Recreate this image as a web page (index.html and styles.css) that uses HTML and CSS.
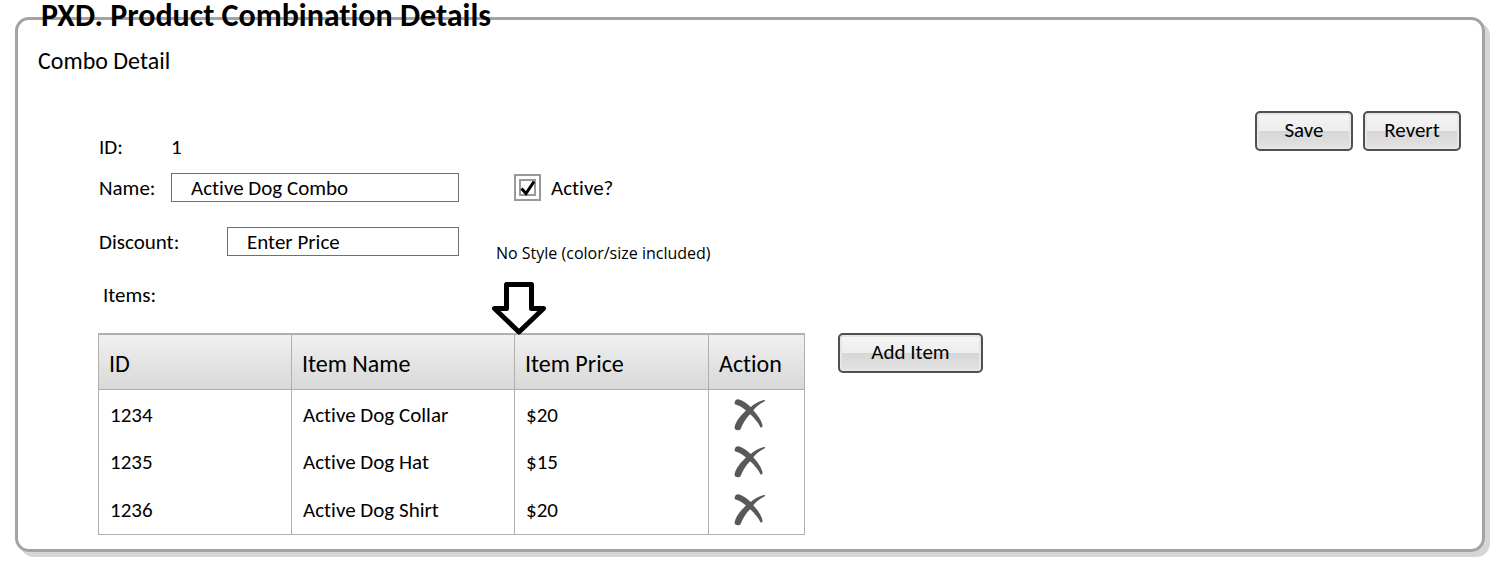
FILE: index.html
```html
<!DOCTYPE html>
<html lang="en">
<head>
<meta charset="utf-8">
<title>PXD. Product Combination Details</title>
<link rel="stylesheet" href="styles.css">
</head>
<body>
<svg class="defs" aria-hidden="true">
  <symbol id="cross" viewBox="0 0 32 32">
    <path d="M.7 3.200Q1.500 0 4.500 .3C9 1.500 13 4.500 16.700 8C21 4.500 25.500 1.700 30 1Q32 1 30.500 2.600C26.500 4.300 22.500 7.500 19.300 11.200C24 16.500 28 22 28.700 27.500L26.700 28.700C24.500 24 20 18.500 16 15.200C11.500 20 8.500 25 7 29.300Q6.500 31.500 4 31.300Q.3 31 .6 28C2 22 7 16 12 11.500C8.500 8.500 5.500 6.500 1.500 5.500Q.3 5 .7 3.200Z"/>
  </symbol>
</svg>
<main class="panel">
  <h1 class="title">PXD. Product Combination Details</h1>
  <h2 class="subtitle">Combo Detail</h2>
  <form class="content">
    <div class="top">
      <div class="fields">
        <div class="row row-id"><span class="label">ID:</span><span>1</span></div>
        <div class="row row-name">
          <div class="field">
            <label class="label" for="name">Name:</label>
            <input class="text" id="name" type="text" value="Active Dog Combo">
          </div>
          <label class="check">
            <span class="box">
              <input class="tick" type="checkbox" checked>
              <svg class="mark" viewBox="0 0 27 27" aria-hidden="true">
                <rect x="6" y="6" width="15" height="15" fill="none" stroke="#999" stroke-width="2"/>
                <path d="M7.500 14.500L12 19.500L20 7.500" fill="none" stroke="#000" stroke-width="3"/>
              </svg>
            </span>
            Active?
          </label>
        </div>
        <div class="field">
          <label class="label wide" for="discount">Discount:</label>
          <input class="text" id="discount" type="text" placeholder="Enter Price">
        </div>
      </div>
      <div class="actions">
        <button class="btn" type="submit">Save</button>
        <button class="btn" type="reset">Revert</button>
      </div>
    </div>
    <div class="items-label" id="items-label">Items:</div>
    <div class="items">
      <table class="table" aria-labelledby="items-label">
        <colgroup><col class="c-id"><col class="c-name"><col class="c-price"><col class="c-action"></colgroup>
        <thead><tr><th>ID</th><th>Item Name</th><th>Item Price</th><th>Action</th></tr></thead>
        <tbody>
          <tr><td>1234</td><td>Active Dog Collar</td><td>$20</td><td><button class="remove" type="button" aria-label="Remove 1234"><svg class="cross"><use href="#cross"/></svg></button></td></tr>
          <tr><td>1235</td><td>Active Dog Hat</td><td>$15</td><td><button class="remove" type="button" aria-label="Remove 1235"><svg class="cross"><use href="#cross"/></svg></button></td></tr>
          <tr><td>1236</td><td>Active Dog Shirt</td><td>$20</td><td><button class="remove" type="button" aria-label="Remove 1236"><svg class="cross"><use href="#cross"/></svg></button></td></tr>
        </tbody>
      </table>
      <button class="btn add" type="button">Add Item</button>
      <div class="note">
        <span>No Style (color/size included)</span>
        <svg class="arrow" viewBox="0 0 54 53" aria-hidden="true"><path d="M14.500 2.500H39.500V26.500H51.500L27 50L2.500 26.500H14.500Z"/></svg>
      </div>
    </div>
  </form>
</main>
</body>
</html>
```
FILE: styles.css
```css
* { box-sizing: border-box; }
body {
  min-height: 100vh;
  margin: 0;
  padding: 17px 17px 17px 15px;
  background: #fff;
  color: #000;
  font: 21px/24px Calibri, Carlito, Lato, sans-serif;
  font-variant-ligatures: none;
}
.defs { position: absolute; width: 0; height: 0; }
.panel {
  position: relative;
  padding: 29px 21px 14px 20px;
  border: 3px solid #a3a3a3;
  border-radius: 14px;
  box-shadow: 5px 5px 0 #d6d6d6;
}
.title {
  position: absolute;
  top: -20px;
  left: 23px;
  margin: 0;
  font-size: 32px;
  line-height: 32px;
  font-weight: 700;
  white-space: nowrap;
}
.subtitle { margin: 0; font-size: 24px; font-weight: 400; }
.content { margin-top: 38px; padding-left: 61px; }
.top { display: flex; justify-content: space-between; align-items: flex-start; }
.fields { padding-top: 24px; }
.row { display: flex; }
.row-name { gap: 55px; margin: 14px 0 25px; }
.field { display: flex; align-items: center; width: 360px; }
.label { width: 72px; }
.wide { width: 128px; }
.text {
  flex: 1;
  min-width: 0;
  height: 29px;
  padding: 0 19px;
  border: 1px solid #707070;
  background: #fff;
  color: #000;
  font: inherit;
  font-variant-ligatures: none;
}
.text::placeholder { color: #000; opacity: 1; }
.check { display: flex; align-items: center; gap: 10px; }
.box { display: grid; }
.tick, .mark { grid-area: 1 / 1; width: 27px; height: 27px; margin: 0; }
.tick { appearance: none; border: 2px solid #999; background: #fff; }
.mark { display: none; pointer-events: none; }
.tick:checked + .mark { display: block; }
.actions { display: flex; gap: 10px; }
.btn {
  min-width: 98px;
  height: 40px;
  padding: 0 31px 2px;
  border: 2px solid #505050;
  border-radius: 5px;
  background: linear-gradient(#f5f5f5, #ededed 50%, #d6d6d6 50%, #e3e3e3);
  box-shadow: inset 0 0 0 2px #e6e6e6;
  color: #000;
  font: inherit;
}
.actions .btn { padding: 0 8px 2px; }
.items-label { margin: 27px 0 26px 4px; }
.items { position: relative; display: flex; align-items: flex-start; gap: 33px; }
.table {
  table-layout: fixed;
  width: 707px;
  margin-left: -1px;
  border-collapse: collapse;
  border: 1px solid #b0b0b0;
  border-top-width: 2px;
}
.c-id { width: 193px; }
.c-name { width: 223px; }
.c-price { width: 194px; }
.table th {
  height: 55px;
  padding: 4px 10px 0;
  border: 1px solid #b0b0b0;
  border-top-width: 2px;
  background: linear-gradient(#f0f0f0, #d8d8d8);
  font-size: 24px;
  font-weight: 400;
  text-align: left;
}
.table td { height: 48px; padding: 0 11px; border: solid #b0b0b0; border-width: 0 1px; }
.table tbody tr:first-child td { height: 49px; padding-top: 2px; }
.remove { display: block; margin-left: 14px; padding: 0; border: 0; background: none; }
.cross { display: block; width: 32px; height: 32px; fill: #595959; }
.add { min-width: 145px; }
.note {
  position: absolute;
  bottom: 100%;
  left: 393px;
  margin-bottom: -2px;
  display: grid;
  gap: 17px;
  font: 16px/24px "Open Sans", sans-serif;
}
.note span { padding-left: 4px; }
.arrow { width: 54px; height: 53px; fill: #fff; stroke: #000; stroke-width: 5; stroke-linejoin: round; }
```
